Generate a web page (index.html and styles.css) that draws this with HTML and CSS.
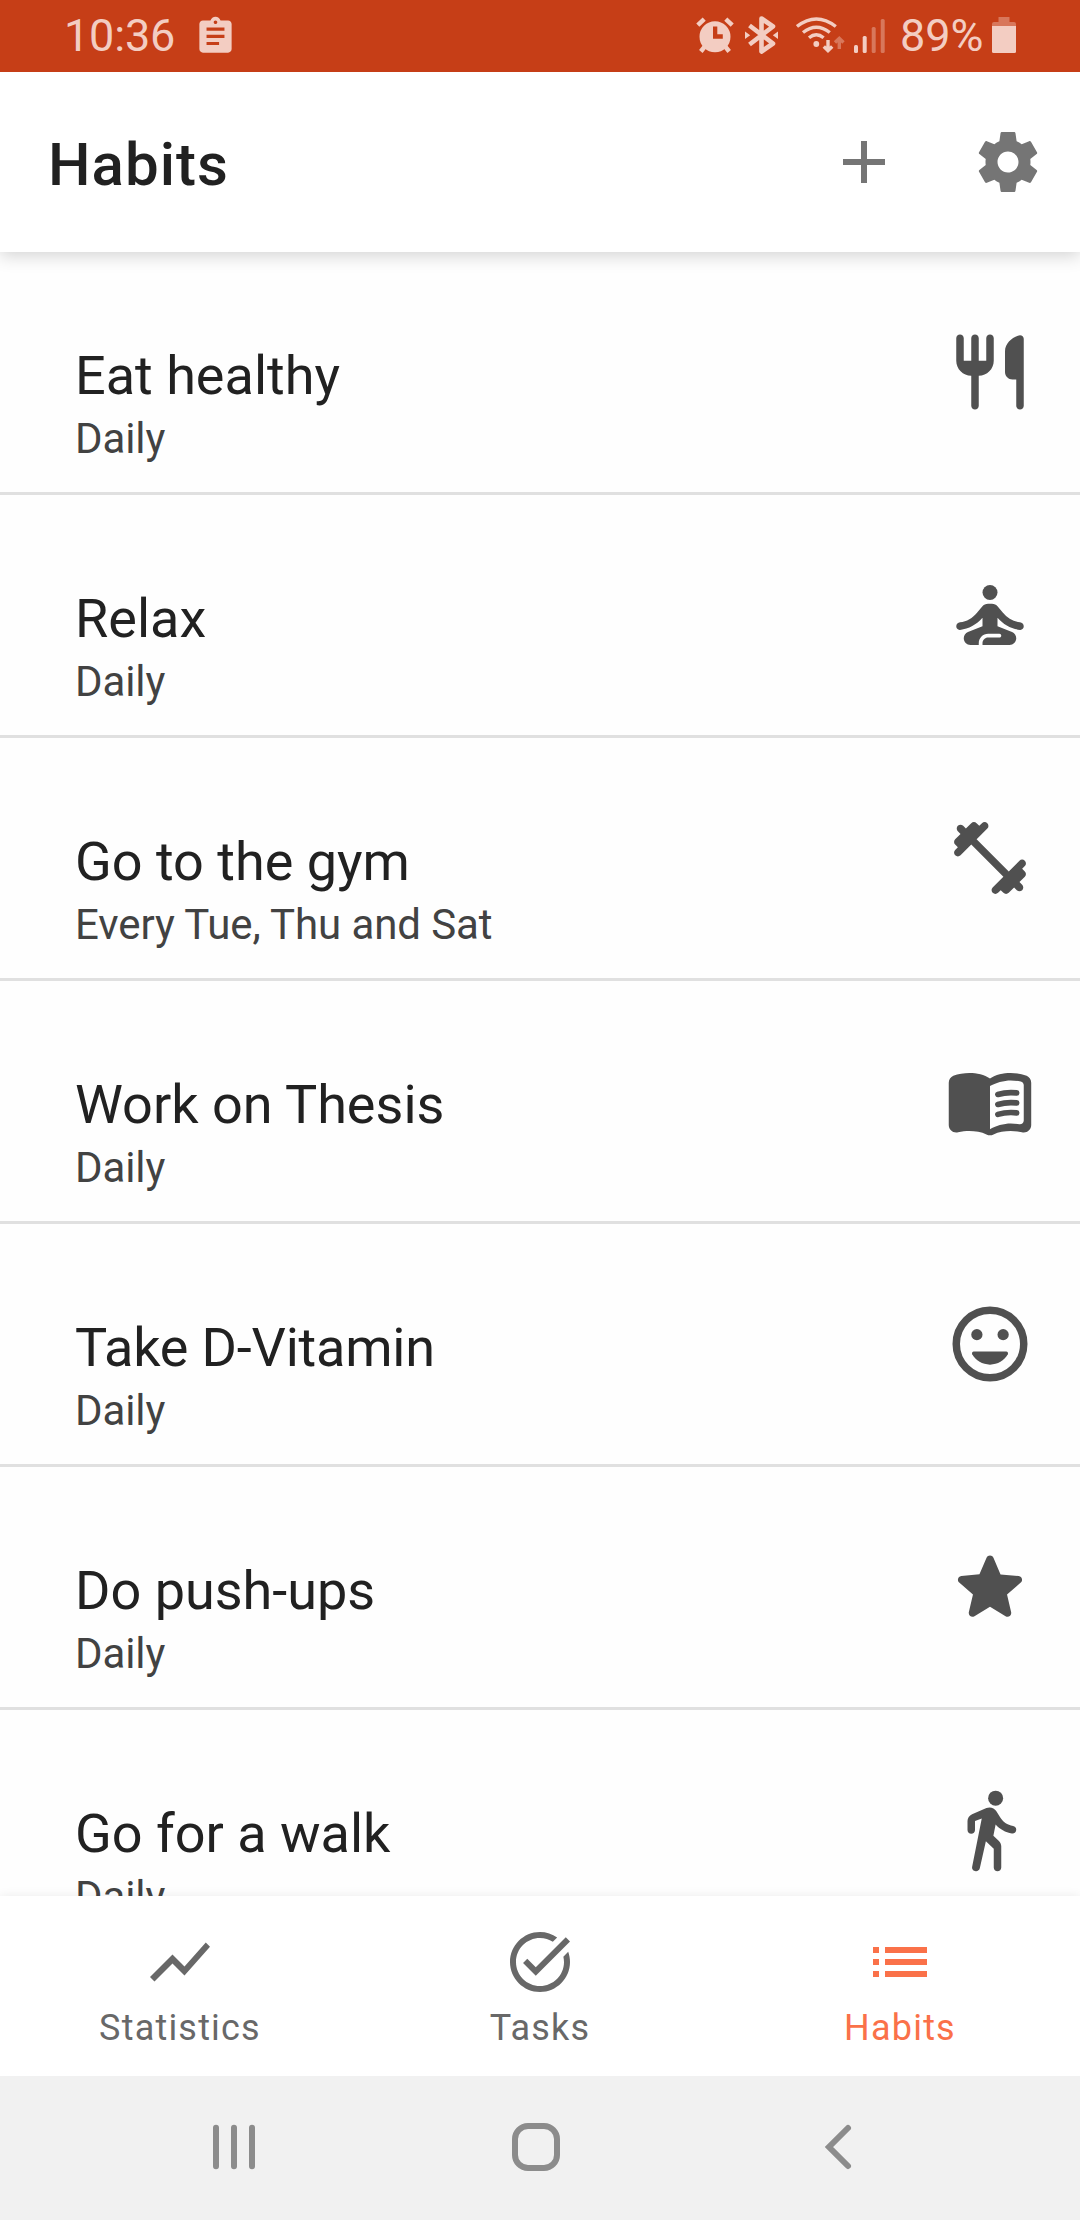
FILE: index.html
```html
<!DOCTYPE html>
<html lang="en">
<head>
    <meta charset="utf-8">
    <title>Habits</title>
    <link rel="stylesheet" href="styles.css">
</head>
<body>
    <div class="status-bar">
        <span class="clock">10:36</span>
        <svg class="note-icon" width="43" height="43" viewBox="0 0 24 24"><path fill-rule="evenodd" d="M19 3h-4.18C14.4 1.84 13.3 1 12 1s-2.4.84-2.82 2H5c-1.1 0-2 .9-2 2v14c0 1.1.9 2 2 2h14c1.1 0 2-.9 2-2V5c0-1.1-.9-2-2-2zm-7 0c.55 0 1 .45 1 1s-.45 1-1 1-1-.45-1-1 .45-1 1-1zM7 7h10v1.8H7zM7 11h10v1.8H7zM7 15h7v1.8H7z"/></svg>

        <div class="status-right">
            <svg class="alarm" width="38" height="38" viewBox="0 0 38 38">
                <path fill-rule="evenodd" d="M19 5.2a15.5 15.5 0 1 0 0 31 15.5 15.5 0 0 0 0-31zM17 10.5h4.3v7.7h5.5v4.5H17z"/>
                <path class="line" stroke-width="4.5" d="M1.8 9.2l6.4-6M29.8 3.2l6.4 6M4.8 35.5l4-5M33.2 35.5l-4-5"/>
            </svg>
            <svg class="bluetooth" width="33" height="38" viewBox="0 0 33 38">
                <path class="line" stroke-width="4.6" stroke-linejoin="round" d="M4.5 9.5L28 27.5 16.5 35.5v-33L28 10.5 4.5 28.5"/>
                <path d="M0 15.5l5.2 3.8L0 23zM33 15.5l-5.2 3.8L33 23z"/>
            </svg>
            <svg class="wifi" width="49" height="38" viewBox="0 0 49 38">
                <g class="line" stroke-width="3.4">
                    <path d="M1 10.5Q20.3-4.5 39.8 10.5M7 16.5q13.3-10.5 26.8 0M13 21.8q7.3-6 14.6 0"/>
                    <path d="M32 24v10M27.8 30.5l4.2 4.2 4.2-4.2"/>
                    <path class="dim" d="M43.3 33V23M39 26.5l4.3-4.2 4.2 4.2"/>
                </g>
                <circle cx="20.3" cy="28" r="2.9"/>
            </svg>
            <svg class="signal" width="31" height="38" viewBox="0 0 31 38">
                <rect x="0" y="29" width="4" height="8" rx="1.5"/>
                <rect x="8.7" y="20" width="4" height="17" rx="1.5"/>
                <rect class="dim" x="17.7" y="11" width="4" height="26" rx="1.5"/>
                <rect class="dim" x="26.7" y="3" width="4" height="34" rx="1.5"/>
            </svg>
            <span class="percent">89%</span>
            <svg class="battery" width="24" height="38" viewBox="0 0 24 38">
                <path class="dim" d="M6.5 1h11v5H22q2 0 2 2v2H0V8q0-2 2-2h4.5z"/>
                <path d="M0 10h24v25.5q0 1.5-1.5 1.5h-21Q0 37 0 35.5z"/>
            </svg>
        </div>
    </div>

    <header class="app-bar">
        <h1>Habits</h1>
        <svg width="72" height="72" viewBox="0 0 24 24"><path d="M19 13h-6v6h-2v-6H5v-2h6V5h2v6h6z"/></svg>
        <svg width="72" height="72" viewBox="0 0 24 24"><path d="M19.43 12.98c.04-.32.07-.64.07-.98s-.03-.66-.07-.98l2.11-1.65c.19-.15.24-.42.12-.64l-2-3.46c-.12-.22-.39-.3-.61-.22l-2.49 1c-.52-.4-1.08-.73-1.69-.98l-.38-2.65C14.46 2.18 14.25 2 14 2h-4c-.25 0-.46.18-.49.42l-.38 2.65c-.61.25-1.17.59-1.69.98l-2.49-1c-.23-.09-.49 0-.61.22l-2 3.46c-.13.22-.07.49.12.64l2.11 1.65c-.04.32-.07.65-.07.98s.03.66.07.98l-2.11 1.65c-.19.15-.24.42-.12.64l2 3.46c.12.22.39.3.61.22l2.49-1c.52.4 1.08.73 1.69.98l.38 2.65c.03.24.24.42.49.42h4c.25 0 .46-.18.49-.42l.38-2.65c.61-.25 1.17-.59 1.69-.98l2.49 1c.23.09.49 0 .61-.22l2-3.46c.12-.22.07-.49-.12-.64l-2.11-1.65zM12 15.5c-1.93 0-3.5-1.57-3.5-3.5s1.57-3.5 3.5-3.5 3.5 1.57 3.5 3.5-1.57 3.5-3.5 3.5z"/></svg>
    </header>

    <main class="habit-list">
        <div class="habit">
            <div class="habit-text">
                <div class="habit-name">Eat healthy</div>
                <div class="habit-days">Daily</div>
            </div>
            <svg class="habit-icon" viewBox="0 0 24 24"><path d="M4 2c.55 0 1 .45 1 1v6h2V3c0-.55.45-1 1-1s1 .45 1 1v6h2V3c0-.55.45-1 1-1s1 .45 1 1v6c0 2.21-1.8 4-4 4v8c0 .55-.45 1-1 1s-1-.45-1-1v-8c-2.2 0-4-1.79-4-4V3c0-.55.45-1 1-1zM20 2.2c.55 0 1 .4 1 .95V21c0 .55-.45 1-1 1s-1-.45-1-1v-7h-1c-1.1 0-2-.9-2-2V6.5c0-2.2 2-3.9 4-4.3z"/></svg>
        </div>
        <div class="habit">
            <div class="habit-text">
                <div class="habit-name">Relax</div>
                <div class="habit-days">Daily</div>
            </div>
            <svg class="habit-icon" viewBox="0 0 24 24"><circle cx="12" cy="6" r="2"/><path d="M21 15c0-.55-.45-.97-1-1.04-1.8-.2-3.36-1.14-4.6-2.64l-1.34-1.6c-.38-.46-.94-.72-1.53-.72h-1.05c-.61 0-1.17.26-1.55.72l-1.34 1.6C7.35 12.82 5.8 13.76 4 13.96c-.55.07-1 .49-1 1.04s.45 1.04 1 .97c2.35-.27 4.39-1.38 6-3.22V15l-3.88 1.55c-.67.27-1.12.93-1.12 1.66C5 19.2 5.8 20 6.79 20H9v-.5c0-1.38 1.12-2.5 2.5-2.5h3c.28 0 .5.22.5.5s-.22.5-.5.5h-3c-.83 0-1.5.67-1.5 1.5v.5h7.21c.99 0 1.79-.8 1.79-1.79 0-.73-.45-1.39-1.12-1.66L14 15v-2.25c1.61 1.84 3.65 2.95 6 3.22.55.07 1-.42 1-.97z"/></svg>
        </div>
        <div class="habit">
            <div class="habit-text">
                <div class="habit-name">Go to the gym</div>
                <div class="habit-days">Every Tue, Thu and Sat</div>
            </div>
            <svg class="habit-icon" viewBox="0 0 24 24"><path d="M20.57 14.86l.72-.72c.39-.39.39-1.02 0-1.41l-.02-.02c-.39-.39-1.02-.39-1.41 0L17 15.57 8.43 7l2.86-2.86c.39-.39.39-1.02 0-1.41l-.02-.02c-.39-.39-1.02-.39-1.41 0l-.72.72-.72-.72c-.39-.39-1.03-.39-1.42 0L5.57 4.14l-.72-.72c-.39-.39-1.04-.39-1.43 0-.39.39-.39 1.04 0 1.43l.72.72L2.71 7c-.39.39-.39 1.02 0 1.41l.72.72-.72.72c-.39.39-.39 1.02 0 1.41l.02.02c.39.39 1.02.39 1.41 0L7 8.43 15.57 17l-2.86 2.86c-.39.39-.39 1.02 0 1.41l.02.02c.39.39 1.02.39 1.41 0l.72-.72.72.72c.39.39 1.02.39 1.41 0l1.44-1.43.72.72c.39.39 1.04.39 1.43 0 .39-.39.39-1.04 0-1.43l-.72-.72L21.29 17c.39-.39.39-1.02 0-1.41l-.72-.73z"/></svg>
        </div>
        <div class="habit">
            <div class="habit-text">
                <div class="habit-name">Work on Thesis</div>
                <div class="habit-days">Daily</div>
            </div>
            <svg class="habit-icon" viewBox="0 0 24 24">
                <path fill-rule="evenodd" d="M17.5 4.5c-1.95 0-4.05.4-5.5 1.5-1.45-1.1-3.55-1.5-5.5-1.5-1.45 0-2.99.22-4.28.79C1.49 5.62 1 6.33 1 7.14v11.28c0 1.3 1.22 2.26 2.48 1.94.98-.25 2.02-.36 3.02-.36 1.56 0 3.22.26 4.56.92.6.3 1.28.3 1.87 0 1.34-.67 3-.92 4.56-.92 1 0 2.04.11 3.02.36 1.26.33 2.48-.63 2.48-1.94V7.14c0-.81-.49-1.52-1.22-1.85-1.28-.57-2.82-.79-4.27-.79zM21 17.23c0 .63-.58 1.09-1.2.98-.75-.14-1.53-.2-2.3-.2-1.7 0-4.15.65-5.5 1.5V8c1.35-.85 3.8-1.5 5.5-1.5.92 0 1.83.09 2.7.28.46.1.8.51.8.98v9.47z"/>
                <path class="line" stroke-width="1.5" stroke-linecap="round" d="M14.1 10.26c1.54-.47 3.3-.59 5-.42M14.1 12.92c1.54-.47 3.3-.59 5-.42M14.1 15.58c1.54-.47 3.3-.59 5-.42"/>
            </svg>
        </div>
        <div class="habit">
            <div class="habit-text">
                <div class="habit-name vitamin">Take D-Vitamin</div>
                <div class="habit-days">Daily</div>
            </div>
            <svg class="habit-icon" viewBox="0 0 24 24">
                <circle class="line" stroke-width="2" cx="12" cy="12" r="9"/>
                <circle cx="8.5" cy="9.5" r="1.5"/>
                <circle cx="15.5" cy="9.5" r="1.5"/>
                <path d="M12 17.5c2.03 0 3.8-1.11 4.75-2.75.19-.33-.05-.75-.44-.75H7.69c-.38 0-.63.42-.44.75.95 1.64 2.72 2.75 4.75 2.75z"/>
            </svg>
        </div>
        <div class="habit">
            <div class="habit-text">
                <div class="habit-name">Do push-ups</div>
                <div class="habit-days">Daily</div>
            </div>
            <svg class="habit-icon" viewBox="0 0 24 24"><path d="M12 17.27l4.15 2.51c.76.46 1.69-.22 1.49-1.08l-1.1-4.72 3.67-3.18c.67-.58.31-1.68-.57-1.75l-4.83-.41-1.89-4.46c-.34-.81-1.5-.81-1.84 0L9.19 8.63l-4.83.41c-.88.07-1.24 1.17-.57 1.75l3.67 3.18-1.1 4.72c-.2.86.73 1.54 1.49 1.08l4.15-2.5z"/></svg>
        </div>
        <div class="habit">
            <div class="habit-text">
                <div class="habit-name">Go for a walk</div>
                <div class="habit-days">Daily</div>
            </div>
            <svg class="habit-icon" viewBox="0 0 24 24"><circle cx="13.5" cy="3.5" r="2"/><path d="M9.8 8.9L7.24 21.81c-.13.61.35 1.19.98 1.19h.08c.47 0 .87-.32.98-.78L10.9 15l2.1 2v5c0 .55.45 1 1 1s1-.45 1-1v-5.64c0-.55-.22-1.07-.62-1.45L12.9 13.5l.6-3c1.07 1.24 2.62 2.13 4.36 2.41.6.09 1.14-.39 1.14-1 0-.49-.36-.9-.84-.98-1.53-.25-2.8-1.16-3.46-2.33l-1-1.6c-.56-.89-1.68-1.25-2.65-.84L7.22 7.78C6.48 8.1 6 8.82 6 9.63V12c0 .55.45 1 1 1s1-.45 1-1V9.6l1.8-.7"/></svg>
        </div>
    </main>

    <nav class="tabs">
        <div class="tab">
            <svg width="72" height="72" viewBox="0 0 24 24"><path d="M3.5 18.49l6-6.01 4 4L22 6.92l-1.41-1.41-7.09 7.97-4-4L2 16.99z"/></svg>
            <span>Statistics</span>
        </div>
        <div class="tab">
            <svg width="72" height="72" viewBox="0 0 24 24"><path d="M22 5.18L10.59 16.6l-4.24-4.24 1.41-1.41 2.83 2.83 10-10L22 5.18zm-2.21 5.04c.13.57.21 1.17.21 1.78 0 4.42-3.58 8-8 8s-8-3.58-8-8 3.58-8 8-8c1.58 0 3.04.46 4.28 1.25l1.44-1.44C16.1 2.67 14.13 2 12 2 6.48 2 2 6.48 2 12s4.48 10 10 10 10-4.48 10-10c0-1.19-.22-2.33-.6-3.39l-1.61 1.61z"/></svg>
            <span>Tasks</span>
        </div>
        <div class="tab active">
            <svg width="72" height="72" viewBox="0 0 24 24"><path d="M3 7h2v2H3zM7 7h14v2H7zM3 11h2v2H3zM7 11h14v2H7zM3 15h2v2H3zM7 15h14v2H7z"/></svg>
            <span>Habits</span>
        </div>
    </nav>

    <div class="system-nav">
        <svg width="48" height="48" viewBox="0 0 48 48"><path stroke-linecap="round" d="M6 4.7v38.6M24 4.7v38.6M42 4.7v38.6"/></svg>
        <svg width="48" height="48" viewBox="0 0 48 48"><rect x="3" y="3" width="42" height="42" rx="13"/></svg>
        <svg width="48" height="48" viewBox="0 0 48 48"><path stroke-linecap="round" d="M34 5L15 24l19 19"/></svg>
    </div>
</body>
</html>
```

FILE: styles.css
```css
:root {
    --status: #c63e17;
    --on-status: #f3cdc2;
    --accent: #fa7149;
    --background: #fefefe;
    --text: #212121;
    --icon: #505050;
}

* {
    box-sizing: border-box;
}

body {
    font-family: Roboto, sans-serif;
    margin: 0;
    width: 1080px;
    height: 2220px;
    background: var(--background);
    color: var(--text);
    display: flex;
    flex-direction: column;
    overflow: hidden;
}

svg {
    display: block;
    flex: none;
    fill: currentColor;
}

.line {
    fill: none;
    stroke: currentColor;
}

.dim {
    opacity: 0.4;
}

.status-bar {
    flex: none;
    height: 72px;
    padding: 0 64px 0 64px;
    background: var(--status);
    color: var(--on-status);
    display: flex;
    align-items: center;
    font-size: 45px;
    line-height: 72px;
    z-index: 2;
}

.clock {
    width: 130px;
    letter-spacing: -0.2px;
}

.status-right {
    margin-left: auto;
    display: flex;
    align-items: center;
}

.status-right svg {
    position: relative;
    top: -1px;
}

.bluetooth {
    margin-left: 11px;
}

.wifi {
    margin-left: 18px;
}

.signal {
    margin-left: 9px;
}

.percent {
    width: 92px;
    margin-left: 15px;
}

.app-bar {
    flex: none;
    height: 180px;
    padding: 0 36px 0 48px;
    background: white;
    display: flex;
    align-items: center;
    gap: 72px;
    color: #757575;
    box-shadow: 0 4px 16px rgba(0, 0, 0, 0.17);
    z-index: 1;
}

.app-bar h1 {
    flex: 1;
    margin: 0;
    padding-top: 5px;
    font-size: 60px;
    font-weight: 500;
    letter-spacing: 1px;
    color: var(--text);
}

.habit-list {
    flex: 1;
    min-height: 0;
    overflow: hidden;
}

.habit {
    height: 243px;
    padding: 75px 45px 0 75px;
    border-bottom: 3px solid #e0e0e0;
    display: flex;
    justify-content: space-between;
}

.habit-text {
    padding-top: 13px;
}

.habit-name {
    font-size: 54px;
    line-height: 72px;
}

.habit-name.vitamin {
    letter-spacing: -0.2px;
}

.habit-days {
    font-size: 42px;
    line-height: 54px;
    letter-spacing: -0.1px;
    color: #424242;
}

.habit-icon {
    width: 90px;
    height: 90px;
    color: var(--icon);
}

.tabs {
    flex: none;
    height: 180px;
    background: white;
    display: grid;
    grid-template-columns: repeat(3, 1fr);
    box-shadow: 0 0 10px rgba(0, 0, 0, 0.08);
    z-index: 1;
}

.tab {
    padding-top: 30px;
    display: flex;
    flex-direction: column;
    align-items: center;
    gap: 8px;
    color: #686868;
    font-size: 36px;
    line-height: 44px;
    letter-spacing: 1.2px;
}

.tab.active {
    color: var(--accent);
}

.system-nav {
    flex: none;
    height: 144px;
    padding: 0 218px 0 210px;
    background: #f1f1f1;
    display: flex;
    align-items: center;
    justify-content: space-between;
    z-index: 1;
}

.system-nav svg {
    position: relative;
    top: -1px;
    fill: none;
    stroke: #8c8c8c;
    stroke-width: 6;
}
```
